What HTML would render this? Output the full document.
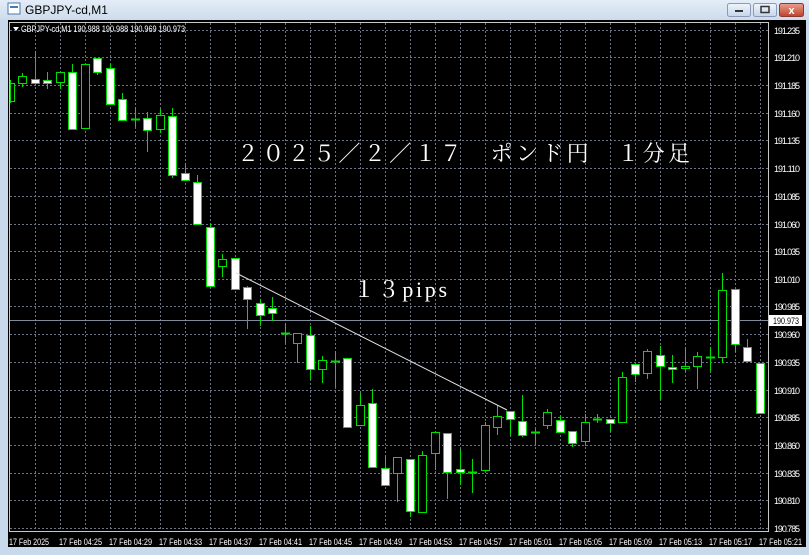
<!DOCTYPE html>
<html><head><meta charset="utf-8"><style>
html,body{margin:0;padding:0;width:809px;height:555px;overflow:hidden;background:#c9d9ec;font-family:"Liberation Sans",sans-serif}
</style></head><body>
<svg width="809" height="555" xmlns="http://www.w3.org/2000/svg" style="position:absolute;left:0;top:0">
<defs><linearGradient id="tb" x1="0" y1="0" x2="0" y2="1"><stop offset="0" stop-color="#e4edf8"/><stop offset="1" stop-color="#cddbec"/></linearGradient>
<linearGradient id="bt" x1="0" y1="0" x2="0" y2="1"><stop offset="0" stop-color="#f0f5fb"/><stop offset="1" stop-color="#c5d5ea"/></linearGradient>
<linearGradient id="cl" x1="0" y1="0" x2="0" y2="1"><stop offset="0" stop-color="#e8a090"/><stop offset="1" stop-color="#c0402a"/></linearGradient></defs>
<rect x="0" y="0" width="809" height="555" fill="#c9d9ec"/>
<rect x="0" y="0" width="809" height="20" fill="url(#tb)"/>
<rect x="8" y="3" width="12" height="11" fill="#fff" stroke="#4a78b0"/><rect x="10" y="6" width="8" height="2" fill="#4a78b0"/>
<text x="25" y="14" font-size="12" fill="#000">GBPJPY-cd,M1</text>
<rect x="727.5" y="3.5" width="23" height="13" rx="2" fill="url(#bt)" stroke="#8a9bb5"/><rect x="735" y="10" width="8" height="2" fill="#333"/>
<rect x="753.5" y="3.5" width="23" height="13" rx="2" fill="url(#bt)" stroke="#8a9bb5"/><rect x="761" y="6.5" width="8" height="6" fill="none" stroke="#333" stroke-width="1.5"/>
<rect x="779.5" y="3.5" width="24" height="13" rx="2" fill="url(#cl)" stroke="#8a3a30"/><text x="791.5" y="14" font-size="11" font-weight="bold" fill="#fff" text-anchor="middle">x</text>
<rect x="8" y="20" width="798" height="527" fill="#000"/>
<g stroke="#6c7384" stroke-width="1" stroke-dasharray="2 2">
<path d="M35.5 23V531M60.5 23V531M85.5 23V531M110.5 23V531M135.5 23V531M160.5 23V531M185.5 23V531M210.5 23V531M235.5 23V531M260.5 23V531M285.5 23V531M310.5 23V531M335.5 23V531M360.5 23V531M385.5 23V531M410.5 23V531M435.5 23V531M460.5 23V531M485.5 23V531M510.5 23V531M535.5 23V531M560.5 23V531M585.5 23V531M610.5 23V531M635.5 23V531M660.5 23V531M685.5 23V531M710.5 23V531M735.5 23V531M760.5 23V531"/>
<path d="M10 30.5H768M10 57.5H768M10 85.5H768M10 113.5H768M10 140.5H768M10 168.5H768M10 196.5H768M10 224.5H768M10 251.5H768M10 279.5H768M10 306.5H768M10 334.5H768M10 362.5H768M10 390.5H768M10 417.5H768M10 445.5H768M10 473.5H768M10 500.5H768M10 528.5H768"/>
</g>
<line x1="10" y1="320.5" x2="768" y2="320.5" stroke="#7f8a9c"/>
<rect x="9.5" y="22.5" width="759" height="509" fill="none" stroke="#c8c8c8"/>
<g id="c" stroke="#00e000" stroke-width="1">
<path d="M10.5 80V103M22.5 73V87M35.5 51V85M47.5 72V89M60.5 71V89M72.5 64V129M85.5 64V128M97.5 58V75M110.5 64V104M122.5 93V120M135.5 107V127M147.5 112V152M160.5 109V133M172.5 108V178M185.5 163V180M197.5 175V225M210.5 223V286M222.5 254V277M235.5 258V289M247.5 286V329M260.5 299V326M272.5 297V321M285.5 323V343M297.5 333V363M310.5 326V380M322.5 356V383M335.5 351V387M347.5 358V427M360.5 393V425M372.5 389V467M385.5 455V485M397.5 457V502M410.5 459V517M422.5 451V513M435.5 432V470M447.5 433V499M460.5 449V485M472.5 459V493M485.5 422V470M497.5 405V435M510.5 411V436M522.5 395V437M535.5 429V445M547.5 409V429M560.5 415V432M572.5 431V447M585.5 414V446M597.5 414V423M610.5 419V432M622.5 372V423M635.5 364V382M647.5 349V379M660.5 346V400M672.5 355V383M685.5 347V372M697.5 352V389M710.5 347V371M722.5 273V363M735.5 289V352M747.5 339V361M760.5 363V413"/>
<path d="M131 119.5H140M281 333.5H290M331 361.5H340M468 472.5H477M531 432.5H540M593 419.5H602M706 357.5H715" stroke-width="2"/>
<g fill="#000">
<rect x="10.5" y="83.5" width="4" height="18"/><rect x="18.5" y="76.5" width="8" height="7"/><rect x="56.5" y="72.5" width="8" height="10"/><rect x="81.5" y="64.5" width="8" height="64"/><rect x="156.5" y="115.5" width="8" height="14"/><rect x="218.5" y="259.5" width="8" height="7"/><rect x="293.5" y="333.5" width="8" height="10"/><rect x="318.5" y="360.5" width="8" height="9"/><rect x="356.5" y="405.5" width="8" height="20"/><rect x="393.5" y="457.5" width="8" height="16"/><rect x="418.5" y="455.5" width="8" height="57"/><rect x="431.5" y="432.5" width="8" height="21"/><rect x="481.5" y="425.5" width="8" height="45"/><rect x="493.5" y="416.5" width="8" height="11"/><rect x="543.5" y="412.5" width="8" height="13"/><rect x="581.5" y="422.5" width="8" height="19"/><rect x="618.5" y="377.5" width="8" height="45"/><rect x="643.5" y="351.5" width="8" height="22"/><rect x="681.5" y="366.5" width="8" height="2"/><rect x="693.5" y="356.5" width="8" height="10"/><rect x="718.5" y="290.5" width="8" height="67"/>
</g>
<g fill="#fff">
<rect x="31.5" y="79.5" width="8" height="4"/><rect x="43.5" y="80.5" width="8" height="3"/><rect x="68.5" y="72.5" width="8" height="57"/><rect x="93.5" y="58.5" width="8" height="14"/><rect x="106.5" y="68.5" width="8" height="36"/><rect x="118.5" y="99.5" width="8" height="21"/><rect x="143.5" y="118.5" width="8" height="12"/><rect x="168.5" y="116.5" width="8" height="59"/><rect x="181.5" y="173.5" width="8" height="7"/><rect x="193.5" y="182.5" width="8" height="42"/><rect x="206.5" y="227.5" width="8" height="59"/><rect x="231.5" y="258.5" width="8" height="31"/><rect x="243.5" y="287.5" width="8" height="12"/><rect x="256.5" y="303.5" width="8" height="12"/><rect x="268.5" y="308.5" width="8" height="5"/><rect x="306.5" y="335.5" width="8" height="34"/><rect x="343.5" y="358.5" width="8" height="69"/><rect x="368.5" y="403.5" width="8" height="64"/><rect x="381.5" y="468.5" width="8" height="17"/><rect x="406.5" y="459.5" width="8" height="52"/><rect x="443.5" y="433.5" width="8" height="39"/><rect x="456.5" y="469.5" width="8" height="3"/><rect x="506.5" y="411.5" width="8" height="8"/><rect x="518.5" y="421.5" width="8" height="14"/><rect x="556.5" y="420.5" width="8" height="12"/><rect x="568.5" y="431.5" width="8" height="12"/><rect x="606.5" y="419.5" width="8" height="4"/><rect x="631.5" y="364.5" width="8" height="10"/><rect x="656.5" y="355.5" width="8" height="11"/><rect x="668.5" y="367.5" width="8" height="2"/><rect x="731.5" y="289.5" width="8" height="55"/><rect x="743.5" y="347.5" width="8" height="14"/><rect x="756.5" y="363.5" width="8" height="50"/>
</g>
</g>
<line x1="236" y1="273" x2="507" y2="410" stroke="#e0e0e0" stroke-width="1"/>
<text x="237" y="161" font-family="Liberation Serif,'Noto Serif CJK SC',serif" font-size="22" fill="#fff" textLength="453" lengthAdjust="spacing">２０２５／２／１７　ポンド円　１分足</text>
<text x="353" y="297" font-family="Liberation Serif,'Noto Serif CJK SC',serif" font-size="22" fill="#fff" textLength="94" lengthAdjust="spacing">１３pips</text>
<path d="M13 27h6l-3 4z" fill="#fff"/>
<text x="21" y="32" font-size="9" fill="#fff" textLength="164" lengthAdjust="spacingAndGlyphs">GBPJPY-cd,M1  190.988 190.988 190.969 190.973</text>
<g font-size="9" fill="#fff" lengthAdjust="spacingAndGlyphs">
<text x="774" y="34" textLength="26">191.235</text><text x="774" y="61" textLength="26">191.210</text><text x="774" y="89" textLength="26">191.185</text><text x="774" y="117" textLength="26">191.160</text><text x="774" y="144" textLength="26">191.135</text><text x="774" y="172" textLength="26">191.110</text><text x="774" y="200" textLength="26">191.085</text><text x="774" y="228" textLength="26">191.060</text><text x="774" y="255" textLength="26">191.035</text><text x="774" y="283" textLength="26">191.010</text><text x="774" y="310" textLength="26">190.985</text><text x="774" y="338" textLength="26">190.960</text><text x="774" y="366" textLength="26">190.935</text><text x="774" y="394" textLength="26">190.910</text><text x="774" y="421" textLength="26">190.885</text><text x="774" y="449" textLength="26">190.860</text><text x="774" y="477" textLength="26">190.835</text><text x="774" y="504" textLength="26">190.810</text><text x="774" y="532" textLength="26">190.785</text>
</g>
<rect x="769" y="315" width="33" height="11" fill="#fff"/>
<text x="773" y="324" font-size="9" fill="#000" textLength="26" lengthAdjust="spacingAndGlyphs">190.973</text>
<g font-size="9" fill="#fff">
<text x="9" y="545" textLength="40" lengthAdjust="spacingAndGlyphs">17 Feb 2025</text><text x="59" y="545" textLength="43" lengthAdjust="spacingAndGlyphs">17 Feb 04:25</text><text x="109" y="545" textLength="43" lengthAdjust="spacingAndGlyphs">17 Feb 04:29</text><text x="159" y="545" textLength="43" lengthAdjust="spacingAndGlyphs">17 Feb 04:33</text><text x="209" y="545" textLength="43" lengthAdjust="spacingAndGlyphs">17 Feb 04:37</text><text x="259" y="545" textLength="43" lengthAdjust="spacingAndGlyphs">17 Feb 04:41</text><text x="309" y="545" textLength="43" lengthAdjust="spacingAndGlyphs">17 Feb 04:45</text><text x="359" y="545" textLength="43" lengthAdjust="spacingAndGlyphs">17 Feb 04:49</text><text x="409" y="545" textLength="43" lengthAdjust="spacingAndGlyphs">17 Feb 04:53</text><text x="459" y="545" textLength="43" lengthAdjust="spacingAndGlyphs">17 Feb 04:57</text><text x="509" y="545" textLength="43" lengthAdjust="spacingAndGlyphs">17 Feb 05:01</text><text x="559" y="545" textLength="43" lengthAdjust="spacingAndGlyphs">17 Feb 05:05</text><text x="609" y="545" textLength="43" lengthAdjust="spacingAndGlyphs">17 Feb 05:09</text><text x="659" y="545" textLength="43" lengthAdjust="spacingAndGlyphs">17 Feb 05:13</text><text x="709" y="545" textLength="43" lengthAdjust="spacingAndGlyphs">17 Feb 05:17</text><text x="759" y="545" textLength="43" lengthAdjust="spacingAndGlyphs">17 Feb 05:21</text>
</g>
</svg>
</body></html>
